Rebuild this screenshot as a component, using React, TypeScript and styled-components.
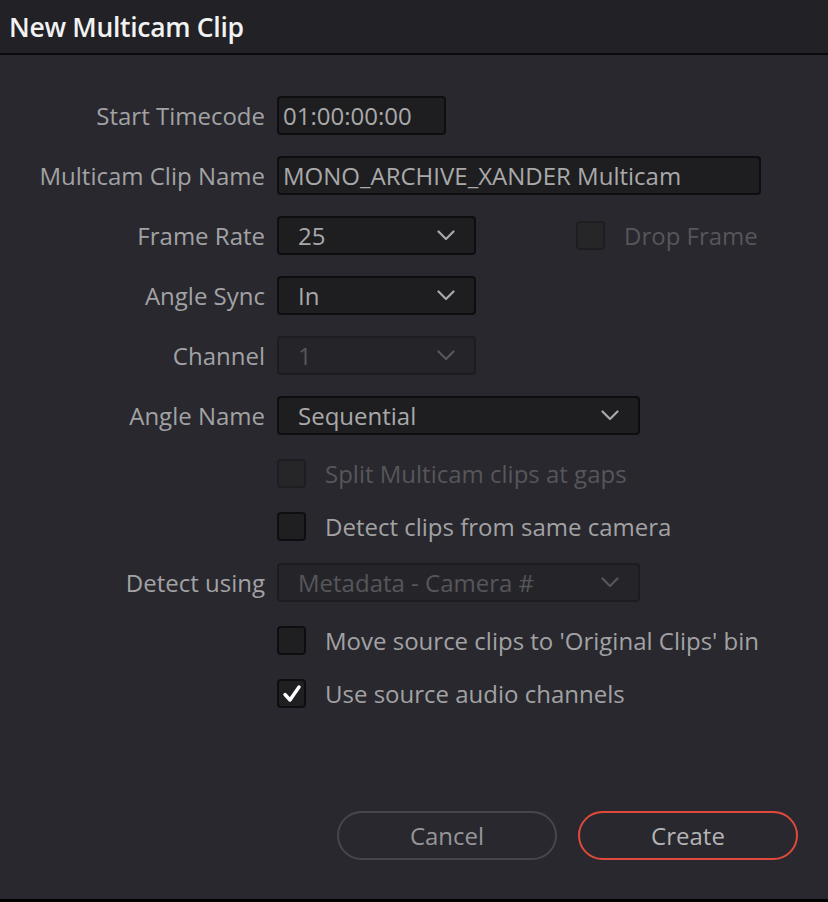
import React from "react";
import styled, { createGlobalStyle } from "styled-components";

const GlobalStyle = createGlobalStyle`
  html, body {
    margin: 0;
    padding: 0;
    background: #28282e;
  }
  body {
    font-family: "Open Sans", "Liberation Sans", sans-serif;
  }
`;

const Dialog = styled.div`
  width: 828px;
  height: 902px;
  background: #28282e;
  display: flex;
  flex-direction: column;
  box-sizing: border-box;
  border-bottom: 3px solid #000;
`;

const Header = styled.div`
  height: 53px;
  background: #212126;
  border-bottom: 2px solid #0a0a0c;
  display: flex;
  align-items: center;
  padding-left: 9px;
`;

const Title = styled.h1`
  margin: 0;
  font-size: 26.5px;
  font-weight: 600;
  color: #f2f2f2;
  letter-spacing: -0.3px;
`;

const Form = styled.div`
  flex: 1;
  display: flex;
  flex-direction: column;
`;

const Row = styled.div<{ $top: number; $h?: number }>`
  display: grid;
  grid-template-columns: 265px auto;
  column-gap: 12px;
  align-items: center;
  margin-top: ${(p) => p.$top}px;
  height: ${(p) => p.$h ?? 39}px;
`;

const Label = styled.label`
  text-align: right;
  font-size: 24px;
  color: #a2a2a4;
  white-space: nowrap;
`;

const Field = styled.div<{ $w: number; $disabled?: boolean }>`
  width: ${(p) => p.$w}px;
  height: 39px;
  box-sizing: border-box;
  background: ${(p) => (p.$disabled ? "#252529" : "#1e1e20")};
  border: 2px solid ${(p) => (p.$disabled ? "#1d1d21" : "#0e0e10")};
  border-radius: 4px;
  display: flex;
  align-items: center;
  font-size: 24px;
  color: ${(p) => (p.$disabled ? "#56565b" : "#a9a9ab")};
  white-space: nowrap;
  overflow: hidden;
`;

const InputText = styled.span`
  padding-left: 4px;
`;

const SelectText = styled.span`
  flex: 1;
  padding-left: 19px;
`;

const Chevron = styled.svg`
  margin-right: 19px;
  flex: none;
`;

const Inline = styled.div`
  display: flex;
  align-items: center;
`;

const CheckWrap = styled.div<{ $ml?: number }>`
  display: flex;
  align-items: center;
  gap: 19px;
  margin-left: ${(p) => p.$ml ?? 0}px;
`;

const Box = styled.div<{ $disabled?: boolean }>`
  width: 29px;
  height: 29px;
  box-sizing: border-box;
  border-radius: 4px;
  background: ${(p) => (p.$disabled ? "#262629" : "#1f1f21")};
  border: 2px solid ${(p) => (p.$disabled ? "#1e1e22" : "#0e0e10")};
  display: flex;
  align-items: center;
  justify-content: center;
`;

const CheckLabel = styled.span<{ $disabled?: boolean }>`
  font-size: 24px;
  color: ${(p) => (p.$disabled ? "#56565b" : "#a2a2a4")};
  white-space: nowrap;
`;

const Footer = styled.div`
  display: flex;
  justify-content: flex-end;
  gap: 21px;
  padding: 0 30px 39px 0;
  margin-top: auto;
`;

const Button = styled.button<{ $primary?: boolean }>`
  width: 220px;
  height: 49px;
  border-radius: 25px;
  background: transparent;
  border: 2px solid ${(p) => (p.$primary ? "#e0493b" : "#46464c")};
  color: ${(p) => (p.$primary ? "#b4b4b6" : "#969698")};
  font-family: "Open Sans", "Liberation Sans", sans-serif;
  font-size: 24px;
  cursor: pointer;
`;

function Arrow({ disabled }: { disabled?: boolean }) {
  return (
    <Chevron width="18" height="11" viewBox="0 0 18 11">
      <polyline
        points="1.5,1.5 9,9 16.5,1.5"
        fill="none"
        stroke={disabled ? "#56565b" : "#a9a9ab"}
        strokeWidth="2.2"
        strokeLinecap="round"
        strokeLinejoin="round"
      />
    </Chevron>
  );
}

function Select({ value, width, disabled }: { value: string; width: number; disabled?: boolean }) {
  return (
    <Field $w={width} $disabled={disabled}>
      <SelectText>{value}</SelectText>
      <Arrow disabled={disabled} />
    </Field>
  );
}

function Check({ label, checked, disabled, ml }: { label: string; checked?: boolean; disabled?: boolean; ml?: number }) {
  return (
    <CheckWrap $ml={ml}>
      <Box $disabled={disabled}>
        {checked && (
          <svg width="20" height="20" viewBox="0 0 20 20">
            <path
              d="M3 10.5 L8 16 L17 3"
              fill="none"
              stroke="#ffffff"
              strokeWidth="3.4"
              strokeLinecap="round"
              strokeLinejoin="round"
            />
          </svg>
        )}
      </Box>
      <CheckLabel $disabled={disabled}>{label}</CheckLabel>
    </CheckWrap>
  );
}

export default function App() {
  return (
    <>
      <GlobalStyle />
      <Dialog>
        <Header>
          <Title>New Multicam Clip</Title>
        </Header>
        <Form>
          <Row $top={41}>
            <Label>Start Timecode</Label>
            <Field $w={169}>
              <InputText>01:00:00:00</InputText>
            </Field>
          </Row>
          <Row $top={21}>
            <Label>Multicam Clip Name</Label>
            <Field $w={484}>
              <InputText>MONO_ARCHIVE_XANDER Multicam</InputText>
            </Field>
          </Row>
          <Row $top={21}>
            <Label>Frame Rate</Label>
            <Inline>
              <Select value="25" width={199} />
              <Check label="Drop Frame" disabled ml={100} />
            </Inline>
          </Row>
          <Row $top={21}>
            <Label>Angle Sync</Label>
            <Select value="In" width={199} />
          </Row>
          <Row $top={21}>
            <Label>Channel</Label>
            <Select value="1" width={199} disabled />
          </Row>
          <Row $top={21}>
            <Label>Angle Name</Label>
            <Select value="Sequential" width={363} />
          </Row>
          <Row $top={22} $h={29}>
            <span />
            <Check label="Split Multicam clips at gaps" disabled />
          </Row>
          <Row $top={24} $h={29}>
            <span />
            <Check label="Detect clips from same camera" />
          </Row>
          <Row $top={24}>
            <Label>Detect using</Label>
            <Select value="Metadata - Camera #" width={363} disabled />
          </Row>
          <Row $top={22} $h={29}>
            <span />
            <Check label="Move source clips to 'Original Clips' bin" />
          </Row>
          <Row $top={24} $h={29}>
            <span />
            <Check label="Use source audio channels" checked />
          </Row>
        </Form>
        <Footer>
          <Button>Cancel</Button>
          <Button $primary>Create</Button>
        </Footer>
      </Dialog>
    </>
  );
}
